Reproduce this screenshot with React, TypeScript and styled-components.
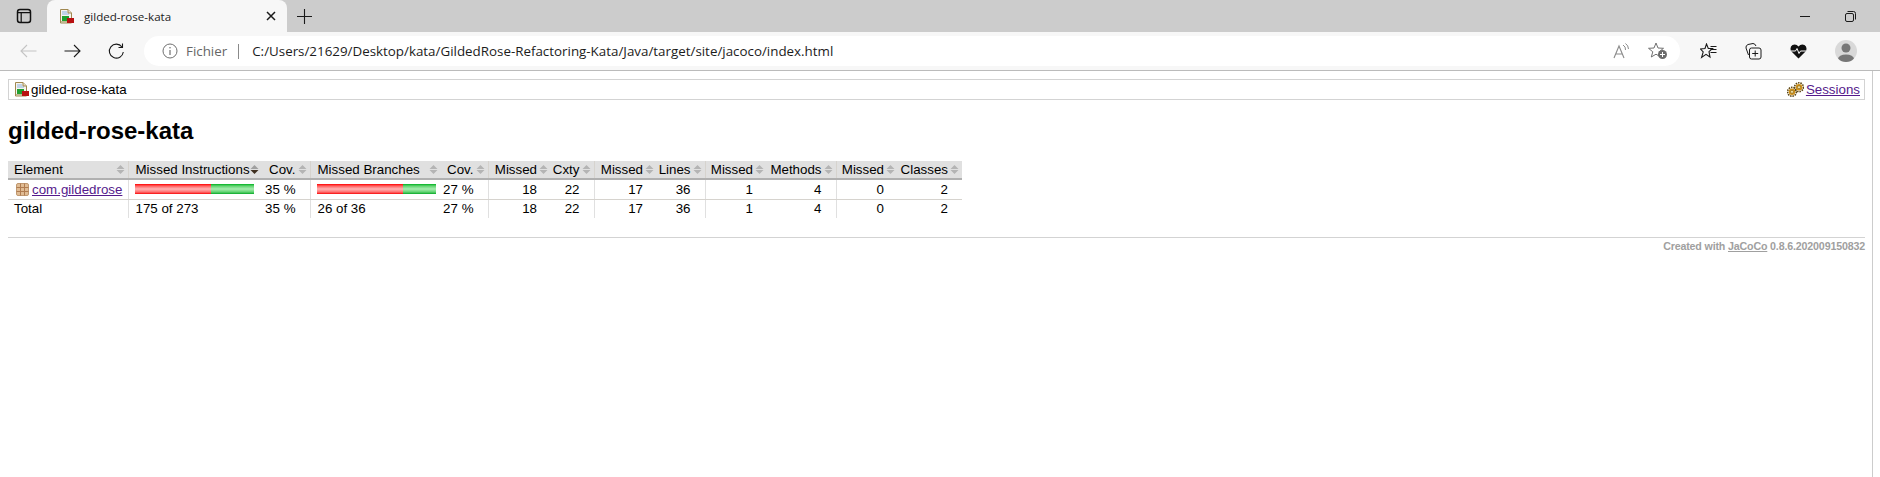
import React from "react";
import styled, { createGlobalStyle } from "styled-components";

const GlobalStyle = createGlobalStyle`
    html, body {
        margin: 0;
        padding: 0;
        background: #ffffff;
    }
    body {
        font-family: "Liberation Sans", Arial, sans-serif;
        overflow: hidden;
    }
`;

const Window = styled.div`
    width: 1880px;
    height: 477px;
    display: flex;
    flex-direction: column;
    overflow: hidden;
`;

const TabStrip = styled.div`
    height: 32px;
    flex: none;
    display: flex;
    align-items: stretch;
    background: #cccccc;
`;

const SideButton = styled.div`
    width: 47px;
    display: flex;
    align-items: center;
    justify-content: center;
`;

const Tab = styled.div`
    width: 240px;
    display: flex;
    align-items: center;
    background: #f7f7f7;
    border-radius: 8px 8px 0 0;
    padding: 0 11px 0 12px;
    box-sizing: border-box;
    font-family: "Open Sans", sans-serif;
    font-size: 11.6px;
    color: #1c1c1c;
`;

const TabTitle = styled.span`
    flex: 1;
    margin-left: 10px;
`;

const NewTab = styled.div`
    width: 30px;
    margin-left: 2px;
    display: flex;
    align-items: center;
    justify-content: center;
`;

const WindowControls = styled.div`
    margin-left: auto;
    display: flex;
    align-items: center;
    gap: 35px;
    padding-right: 24px;
`;

const Toolbar = styled.div`
    height: 38px;
    flex: none;
    display: flex;
    align-items: center;
    background: #f7f7f7;
    border-bottom: 1px solid #bbbbbb;
`;

const NavButtons = styled.div`
    width: 144px;
    display: flex;
    align-items: center;
    padding-left: 20px;
    box-sizing: border-box;
    gap: 27px;
`;

const AddressBar = styled.div`
    width: 1536px;
    height: 30px;
    display: flex;
    align-items: center;
    background: #ffffff;
    border-radius: 15px;
    padding: 0 12px 0 18px;
    box-sizing: border-box;
    font-family: "Open Sans", sans-serif;
    font-size: 13.36px;
`;

const Scheme = styled.span`
    margin-left: 8px;
    color: #666666;
`;

const Divider = styled.span`
    width: 1px;
    height: 15px;
    background: #8a8a8a;
    margin: 0 13px 0 11px;
`;

const Url = styled.span`
    flex: 1;
    color: #1c1c1c;
`;

const AddressActions = styled.div`
    display: flex;
    align-items: center;
    gap: 18px;
`;

const ToolActions = styled.div`
    display: flex;
    align-items: center;
    gap: 28px;
    margin-left: 20px;
`;

const Avatar = styled.div`
    width: 22px;
    height: 22px;
    border-radius: 50%;
    background: #d9d9d9;
    overflow: hidden;
    display: flex;
`;

const Viewport = styled.div`
    width: 1873px;
    flex: 1;
    background: #ffffff;
    border-right: 1px solid #cccccc;
    padding: 8px 7px 8px 8px;
    box-sizing: border-box;
    font-size: 13.33px;
    color: #000000;
`;

const Breadcrumb = styled.div`
    height: 21px;
    display: flex;
    align-items: center;
    border: 1px solid #d3d3d3;
    padding: 0 4px 0 5px;
    box-sizing: border-box;
`;

const CrumbLabel = styled.span`
    flex: 1;
    margin-left: 2px;
`;

const SessionLink = styled.a`
    color: #551a8b;
    text-decoration: underline;
    margin-left: 2px;
`;

const Title = styled.h1`
    font-size: 24px;
    font-weight: bold;
    line-height: 28px;
    margin: 17px 0 16px;
`;

const CoverageTable = styled.table`
    border-collapse: collapse;
    table-layout: fixed;
    width: 954px;
    white-space: nowrap;
    font-size: 13.33px;
`;

const HeadCell = styled.td<{ $right?: boolean; $sep?: boolean; $w: number }>`
    width: ${(p) => p.$w}px;
    height: 18px;
    box-sizing: border-box;
    padding: 0 3px 0 ${(p) => (p.$right ? 0 : p.$sep ? 7 : 6)}px;
    background: #e0e0e0;
    border-bottom: 2px solid #b0b0b0;
    border-left: ${(p) => (p.$sep ? "1px solid #d6d3ce" : "none")};
    text-align: ${(p) => (p.$right ? "right" : "left")};
    line-height: 15px;
`;

const HeadInner = styled.span`
    display: flex;
    align-items: center;
    justify-content: space-between;
`;

const HeadRight = styled.span`
    display: flex;
    align-items: center;
    justify-content: flex-end;
    gap: 2px;
`;

const Cell = styled.td<{ $right?: boolean; $sep?: boolean; $line?: boolean }>`
    height: ${(p) => (p.$line ? 20 : 19)}px;
    box-sizing: border-box;
    padding: 0 ${(p) => (p.$right ? 14 : 5)}px 0 ${(p) => (p.$right ? 0 : p.$sep ? 7 : 6)}px;
    border-left: ${(p) => (p.$sep ? "1px solid #e0e0e0" : "none")};
    border-bottom: ${(p) => (p.$line ? "1px solid #d6d3ce" : "none")};
    text-align: ${(p) => (p.$right ? "right" : "left")};
`;

const PackageLink = styled.a`
    color: #551a8b;
    text-decoration: underline;
    margin-left: 3px;
`;

const ElementName = styled.span`
    display: flex;
    align-items: center;
    padding-left: 2px;
`;

const Bars = styled.div`
    display: flex;
    height: 10px;
    margin-left: -1px;
`;

const Bar = styled.div<{ $color: "red" | "green" }>`
    height: 10px;
    background: ${(p) =>
        p.$color === "red"
            ? "linear-gradient(#ff0000 0%, #ff6060 20%, #ffb4b4 50%, #ff7070 80%, #f80808 100%)"
            : "linear-gradient(#00b020 0%, #60d470 20%, #a8ecb0 50%, #60d470 80%, #08a828 100%)"};
`;

const Footer = styled.div`
    margin-top: 19px;
    border-top: 1px solid #d3d3d3;
    padding-top: 2px;
    text-align: right;
    font-size: 10.67px;
    font-weight: bold;
    letter-spacing: -0.16px;
    color: #a0a0a0;
`;

const FooterLink = styled.a`
    color: #a0a0a0;
    text-decoration: underline;
`;

function SortIcon({ active }: { active?: boolean }) {
    return (
        <svg width="9" height="11" viewBox="0 0 9 11" style={{ flex: "none" }}>
            <path d="M4.5 1 L8.5 5 H.5 Z" fill={active ? "#a0a0a0" : "#b4b4b4"} />
            <path d="M.5 6 H8.5 L4.5 10 Z" fill={active ? "#403020" : "#b4b4b4"} />
        </svg>
    );
}

function ReportIcon() {
    return (
        <svg width="15" height="15" viewBox="0 0 15 15" style={{ flex: "none" }}>
            <path d="M1.5 .5 H9 L12.5 4 V14 H1.5 Z" fill="#f6f4ee" stroke="#a08850" />
            <path d="M3 3 H8 M3 5 H10" stroke="#8ab0e0" />
            <path d="M9 .5 V4 H12.5" fill="#e8e0c8" stroke="#a08850" />
            <rect x="3" y="7" width="7" height="5" fill="#20a030" />
            <rect x="8" y="9" width="7" height="5" fill="#b81010" />
            <rect x="2" y="12" width="6" height="2" fill="#c0b890" />
        </svg>
    );
}

function Gear({ cx, cy }: { cx: number; cy: number }) {
    return (
        <g>
            <circle cx={cx} cy={cy} r="4.4" fill="none" stroke="#5a4410" strokeWidth="1.6" strokeDasharray="1.5 .9" />
            <circle cx={cx} cy={cy} r="3.3" fill="#d09018" />
            <circle cx={cx} cy={cy} r="1.5" fill="#f4e4a8" stroke="#6a5010" strokeWidth=".5" />
        </g>
    );
}

function GearsIcon() {
    return (
        <svg width="17" height="15" viewBox="0 0 17 15" style={{ flex: "none" }}>
            <Gear cx={5} cy={9.8} />
            <Gear cx={12} cy={5.2} />
        </svg>
    );
}

function PackageIcon() {
    return (
        <svg width="13" height="13" viewBox="0 0 13 13" style={{ flex: "none" }}>
            <rect x=".5" y=".5" width="12" height="12" rx="1.5" fill="#e0bc94" stroke="#c09870" />
            <path d="M.5 4.5 H12.5 M.5 8.5 H12.5 M4.5 .5 V12.5 M8.5 .5 V12.5" stroke="#b07c50" strokeWidth="1" />
        </svg>
    );
}

const stroke = { fill: "none", stroke: "#1a1a1a", strokeWidth: 1.1 };

function Sidebar() {
    return (
        <svg width="16" height="16" viewBox="0 0 16 16" style={{ marginLeft: 1 }}>
            <rect x="1.5" y="1.5" width="13" height="13" rx="2.5" fill="none" stroke="#111111" strokeWidth="1.5" />
            <path d="M1.5 4.7 H14.5 M5.2 4.7 V14.5" fill="none" stroke="#111111" strokeWidth="1.2" />
        </svg>
    );
}

function Arrow({ color }: { color: string }) {
    return (
        <svg width="17" height="14" viewBox="0 0 17 14">
            <path d="M.5 7 H16 M10 1 L16 7 L10 13" fill="none" stroke={color} strokeWidth="1.1" />
        </svg>
    );
}

function BackArrow() {
    return (
        <svg width="17" height="14" viewBox="0 0 17 14">
            <path d="M16.5 7 H1 M7 1 L1 7 L7 13" fill="none" stroke="#c4c4c4" strokeWidth="1.1" />
        </svg>
    );
}

function Reload() {
    return (
        <svg width="16" height="17" viewBox="0 0 16 17">
            <path d="M14 4 A7 7 0 1 0 15.3 9" {...stroke} />
            <path d="M14.5 .5 V4.5 H10.5" {...stroke} />
        </svg>
    );
}

function Info() {
    return (
        <svg width="16" height="16" viewBox="0 0 16 16">
            <circle cx="8" cy="8" r="7" fill="none" stroke="#707070" strokeWidth="1" />
            <path d="M8 7 V12" stroke="#707070" strokeWidth="1.2" />
            <circle cx="8" cy="4.8" r=".8" fill="#707070" />
        </svg>
    );
}

function Close() {
    return (
        <svg width="10" height="10" viewBox="0 0 10 10">
            <path d="M1 1 L9 9 M9 1 L1 9" stroke="#1a1a1a" strokeWidth="1.5" />
        </svg>
    );
}

function Plus() {
    return (
        <svg width="15" height="15" viewBox="0 0 15 15">
            <path d="M7.5 0 V15 M0 7.5 H15" stroke="#1a1a1a" strokeWidth="1.1" />
        </svg>
    );
}

function Minimize() {
    return (
        <svg width="10" height="10" viewBox="0 0 10 10">
            <path d="M0 5.5 H10" stroke="#1a1a1a" strokeWidth="1" />
        </svg>
    );
}

function Restore() {
    return (
        <svg width="11" height="11" viewBox="0 0 11 11">
            <rect x=".5" y="2.5" width="8" height="8" rx="1.5" fill="none" stroke="#1a1a1a" />
            <path d="M2.5 .5 H8.5 A2 2 0 0 1 10.5 2.5 V8.5" fill="none" stroke="#1a1a1a" />
        </svg>
    );
}

function ReadAloud() {
    return (
        <svg width="17" height="16" viewBox="0 0 17 16">
            <path d="M1 15 L6 3 L11 15 M2.8 11 H9.2" fill="none" stroke="#8a8a8a" strokeWidth="1.1" />
            <path d="M10 2 A5 5 0 0 1 12.5 7 M12.5 .5 A7 7 0 0 1 15.5 6" fill="none" stroke="#8a8a8a" />
        </svg>
    );
}

function StarAdd() {
    return (
        <svg width="20" height="18" viewBox="0 0 20 18">
            <path d="M8 1 L10 6 L15.5 6.3 L11.2 9.8 L12.7 15 L8 12.2 L3.3 15 L4.8 9.8 L.5 6.3 L6 6 Z" fill="none" stroke="#707070" />
            <circle cx="14.5" cy="12.5" r="4.5" fill="#6a6a6a" />
            <path d="M14.5 10 V15 M12 12.5 H17" stroke="#ffffff" />
        </svg>
    );
}

function Favorites() {
    return (
        <svg width="17" height="16" viewBox="0 0 17 16">
            <path d="M6.5 1 L8.3 5.5 H12.5 L9 8.6 L10 14 L6 11.4 L1.6 14.5 L3.2 9 L.5 6 L5 5.5 Z" fill="none" stroke="#1a1a1a" strokeWidth="1.1" />
            <path d="M10.5 3.5 H16.5 M10.5 6.5 H16.5 M10.5 9.5 H16.5" stroke="#1a1a1a" strokeWidth="1" />
        </svg>
    );
}

function Collections() {
    return (
        <svg width="17" height="17" viewBox="0 0 17 17">
            <path d="M3.5 12 L1 5 Q.5 2.5 3 1.5 L8 .5 Q10 .5 11 3" fill="none" stroke="#1a1a1a" />
            <rect x="4.5" y="5" width="11.5" height="11" rx="2" fill="#f7f7f7" stroke="#1a1a1a" />
            <path d="M10.2 7.5 V13.5 M7.2 10.5 H13.2" stroke="#1a1a1a" />
        </svg>
    );
}

function Heart() {
    return (
        <svg width="17" height="15" viewBox="0 0 17 15">
            <path d="M8.5 14.5 L1 7 Q-.5 3 2.5 1 Q6 -.5 8.5 2.5 Q11 -.5 14.5 1 Q17.5 3 16 7 Z" fill="#111111" />
            <path d="M1 7 H5.5 L7 4.5 L9 9.5 L10.5 7 H16" fill="none" stroke="#ffffff" strokeWidth="1" />
        </svg>
    );
}

function AvatarFigure() {
    return (
        <svg width="22" height="22" viewBox="0 0 22 22">
            <circle cx="11" cy="8" r="4.5" fill="#777777" />
            <ellipse cx="11" cy="19" rx="8" ry="4.5" fill="#777777" />
        </svg>
    );
}

interface Column {
    label: string;
    width: number;
    right?: boolean;
    sep?: boolean;
    active?: boolean;
}

const columns: Column[] = [
    { label: "Element", width: 120 },
    { label: "Missed Instructions", width: 134, sep: true, active: true },
    { label: "Cov.", width: 48, right: true },
    { label: "Missed Branches", width: 131, sep: true },
    { label: "Cov.", width: 47, right: true },
    { label: "Missed", width: 63, right: true, sep: true },
    { label: "Cxty", width: 43, right: true },
    { label: "Missed", width: 63, right: true, sep: true },
    { label: "Lines", width: 48, right: true },
    { label: "Missed", width: 62, right: true, sep: true },
    { label: "Methods", width: 69, right: true },
    { label: "Missed", width: 62, right: true, sep: true },
    { label: "Classes", width: 64, right: true },
];

const counters = ["18", "22", "17", "36", "1", "4", "0", "2"];

export default function App() {
    return (
        <Window>
            <GlobalStyle />
            <TabStrip>
                <SideButton><Sidebar /></SideButton>
                <Tab>
                    <ReportIcon />
                    <TabTitle>gilded-rose-kata</TabTitle>
                    <Close />
                </Tab>
                <NewTab><Plus /></NewTab>
                <WindowControls>
                    <Minimize />
                    <Restore />
                </WindowControls>
            </TabStrip>
            <Toolbar>
                <NavButtons>
                    <BackArrow />
                    <Arrow color="#1a1a1a" />
                    <Reload />
                </NavButtons>
                <AddressBar>
                    <Info />
                    <Scheme>Fichier</Scheme>
                    <Divider />
                    <Url>C:/Users/21629/Desktop/kata/GildedRose-Refactoring-Kata/Java/target/site/jacoco/index.html</Url>
                    <AddressActions>
                        <ReadAloud />
                        <StarAdd />
                    </AddressActions>
                </AddressBar>
                <ToolActions>
                    <Favorites />
                    <Collections />
                    <Heart />
                    <Avatar><AvatarFigure /></Avatar>
                </ToolActions>
            </Toolbar>
            <Viewport>
                <Breadcrumb>
                    <ReportIcon />
                    <CrumbLabel>gilded-rose-kata</CrumbLabel>
                    <GearsIcon />
                    <SessionLink>Sessions</SessionLink>
                </Breadcrumb>
                <Title>gilded-rose-kata</Title>
                <CoverageTable>
                    <thead>
                        <tr>
                            {columns.map((col, index) => (
                                <HeadCell key={index} $w={col.width} $right={col.right} $sep={col.sep}>
                                    {col.right ? (
                                        <HeadRight>{col.label}<SortIcon /></HeadRight>
                                    ) : (
                                        <HeadInner>{col.label}<SortIcon active={col.active} /></HeadInner>
                                    )}
                                </HeadCell>
                            ))}
                        </tr>
                    </thead>
                    <tbody>
                        <tr>
                            <Cell $line>
                                <ElementName>
                                    <PackageIcon />
                                    <PackageLink>com.gildedrose</PackageLink>
                                </ElementName>
                            </Cell>
                            <Cell $line $sep>
                                <Bars>
                                    <Bar $color="red" style={{ width: 76 }} />
                                    <Bar $color="green" style={{ width: 43 }} />
                                </Bars>
                            </Cell>
                            <Cell $line $right>35 %</Cell>
                            <Cell $line $sep>
                                <Bars>
                                    <Bar $color="red" style={{ width: 86 }} />
                                    <Bar $color="green" style={{ width: 33 }} />
                                </Bars>
                            </Cell>
                            <Cell $line $right>27 %</Cell>
                            {counters.map((value, index) => (
                                <Cell key={index} $line $right $sep={index % 2 === 0}>{value}</Cell>
                            ))}
                        </tr>
                        <tr>
                            <Cell>Total</Cell>
                            <Cell $sep>175 of 273</Cell>
                            <Cell $right>35 %</Cell>
                            <Cell $sep>26 of 36</Cell>
                            <Cell $right>27 %</Cell>
                            {counters.map((value, index) => (
                                <Cell key={index} $right $sep={index % 2 === 0}>{value}</Cell>
                            ))}
                        </tr>
                    </tbody>
                </CoverageTable>
                <Footer>
                    Created with <FooterLink>JaCoCo</FooterLink> 0.8.6.202009150832
                </Footer>
            </Viewport>
        </Window>
    );
}
